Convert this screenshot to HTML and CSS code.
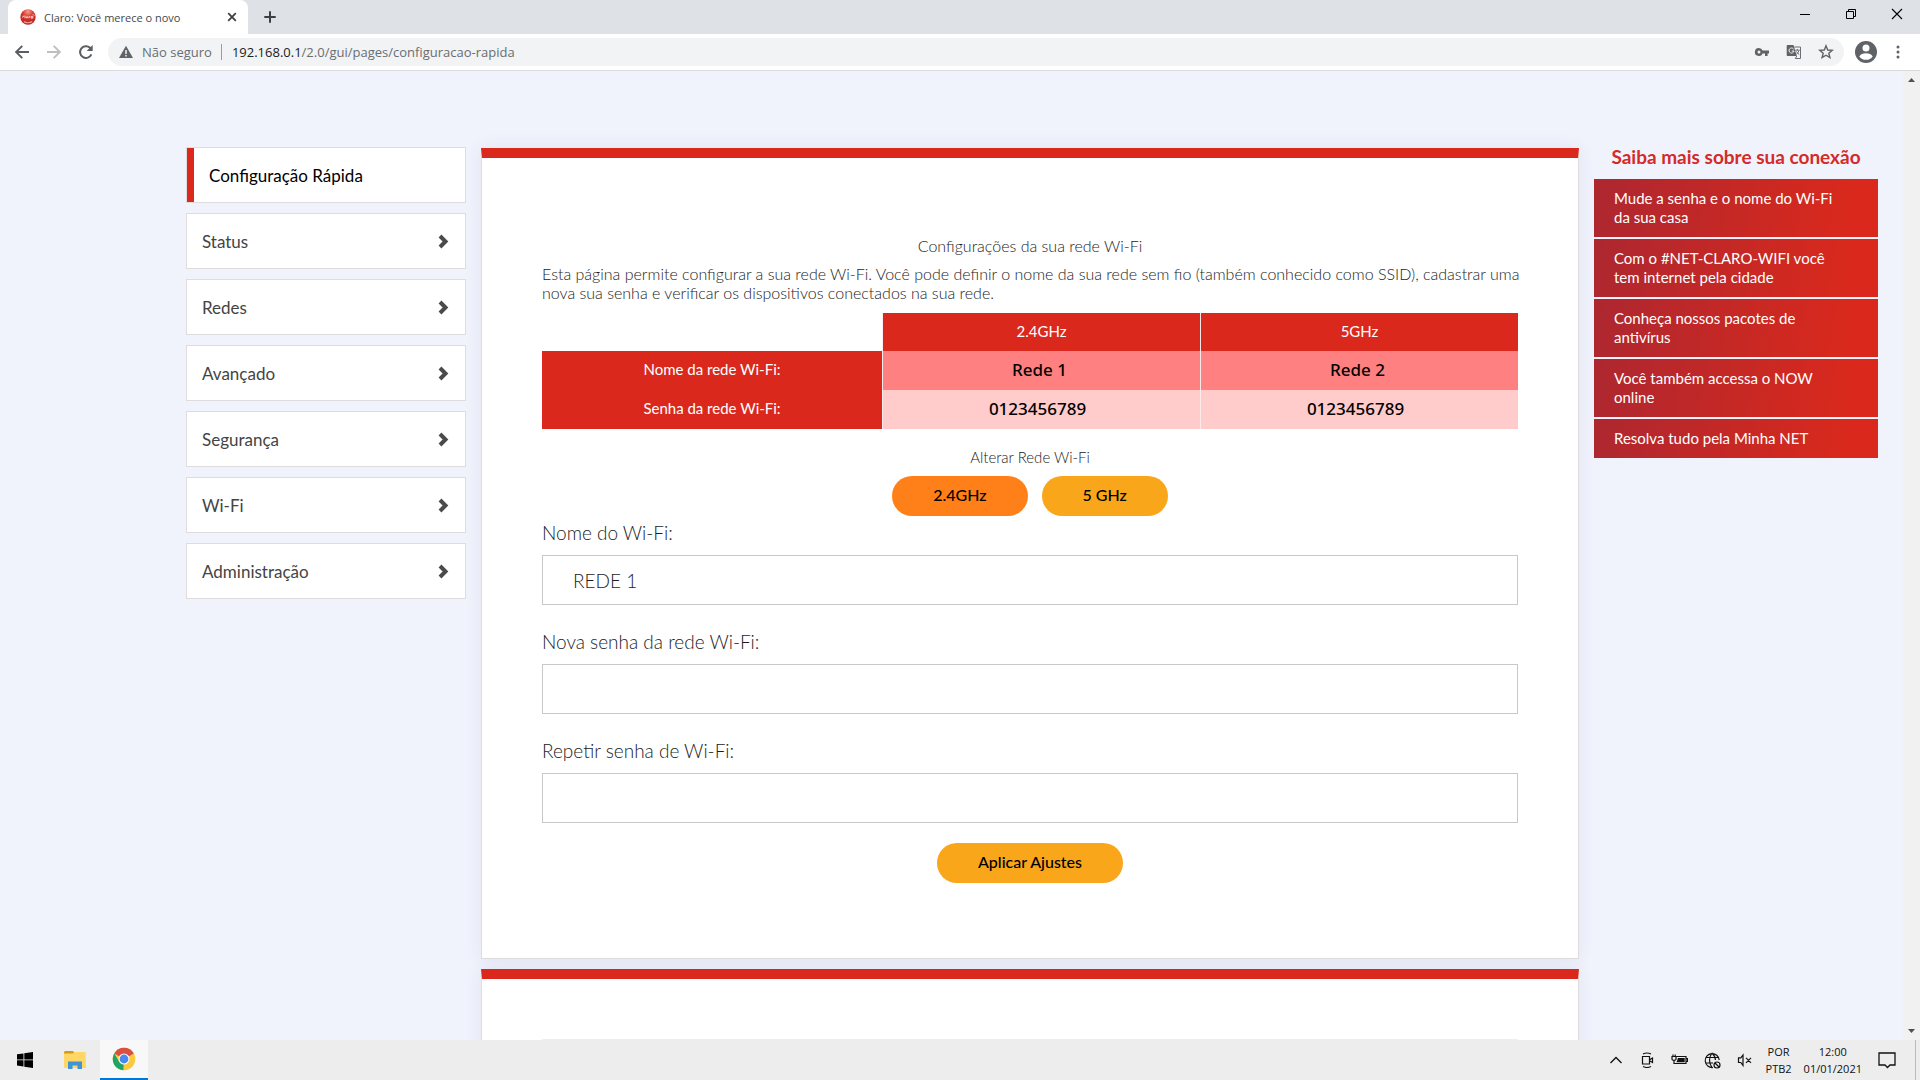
FILE: index.html
```html
<!DOCTYPE html>
<html lang="pt-BR">
<head>
<meta charset="utf-8">
<title>Claro: Você merece o novo</title>
<link rel="stylesheet" href="styles.css">
</head>
<body>
<header class="tabstrip">
  <div class="tab">
    <svg class="favicon" width="16" height="16" viewBox="0 0 16 16"><defs><radialGradient id="ball" cx="50%" cy="15%" r="85%"><stop offset="0" stop-color="#f2a08c"/><stop offset=".4" stop-color="#da3a30"/><stop offset="1" stop-color="#b91c22"/></radialGradient></defs><circle cx="8" cy="8" r="7.7" fill="url(#ball)"/><path d="M2.5 8.6q0-1.7 1.8-1.5M5 6.6v2.6M6.4 9.2V7.8h1.3v1.4M9 9.2V7.6h1M11 7.6h1.8v1.5H11zM12.4 6.2l.8-.9M13.5 6.8l.9-.3" stroke="#fbe4e0" stroke-width=".9" fill="none"/><path d="M3.8 12.6q4.2 2.3 8.4 0" stroke="#e99a90" stroke-width="1.2" fill="none"/></svg>
    <span class="tab-title">Claro: Você merece o novo</span>
    <button class="icon-btn" aria-label="Fechar guia"><svg width="16" height="16" viewBox="0 0 16 16"><path d="M4.2 4.2l7.6 7.6M11.8 4.2l-7.6 7.6" stroke="#3c4043" stroke-width="1.8"/></svg></button>
  </div>
  <button class="icon-btn new-tab" aria-label="Nova guia"><svg width="16" height="16" viewBox="0 0 16 16"><path d="M8 2.3v11.4M2.3 8h11.4" stroke="#3c4043" stroke-width="2"/></svg></button>
  <div class="window-controls">
    <button class="icon-btn" aria-label="Minimizar"><svg width="46" height="28" viewBox="0 0 46 28"><path d="M18 14.5h10" stroke="#000"/></svg></button>
    <button class="icon-btn" aria-label="Restaurar"><svg width="46" height="28" viewBox="0 0 46 28"><path d="M18.500 11.500h7v7h-7zM20.500 11.500v-2h7v7h-2" fill="none" stroke="#000"/></svg></button>
    <button class="icon-btn" aria-label="Fechar"><svg width="46" height="28" viewBox="0 0 46 28"><path d="M18 9l10 10M28 9l-10 10" stroke="#000" stroke-width="1.100"/></svg></button>
  </div>
</header>
<div class="toolbar">
  <button class="icon-btn" aria-label="Voltar"><svg width="16" height="16" viewBox="0 0 16 16"><path d="M15 8H2.500M8.300 1.800L2.100 8l6.200 6.200" fill="none" stroke="#5a5e62" stroke-width="1.900"/></svg></button>
  <button class="icon-btn" aria-label="Avançar"><svg width="16" height="16" viewBox="0 0 16 16"><path d="M1 8h12.500M7.700 1.800L13.900 8l-6.200 6.200" fill="none" stroke="#bdbfc1" stroke-width="1.900"/></svg></button>
  <button class="icon-btn" aria-label="Recarregar"><svg width="16" height="16" viewBox="0 0 16 16"><path d="M13.400 10.400A5.900 5.900 0 1 1 12 3.700L13.500 5.200" fill="none" stroke="#5a5e62" stroke-width="2"/><path d="M14.700 1v6H8.700z" fill="#5a5e62"/></svg></button>
  <div class="address">
    <svg width="14" height="14" viewBox="0 0 14 14"><path d="M7 .8L14 13H0z" fill="#5f6368"/><path d="M7 5v4M7 10v1.600" stroke="#f1f3f4" stroke-width="1.500"/></svg>
    <span class="insecure">Não seguro</span>
    <span class="url"><b>192.168.0.1</b>/2.0/gui/pages/configuracao-rapida</span>
    <div class="address-actions">
      <button class="icon-btn" aria-label="Senhas"><svg width="16" height="16" viewBox="0 0 16 16"><path fill-rule="evenodd" d="M5 4a4 4 0 1 0 3.600 5.400H11V12h2.600V9.400H15V6.500H8.600A4 4 0 0 0 5 4zm0 2.500a1.500 1.500 0 1 1 0 3 1.500 1.500 0 0 1 0-3z" fill="#5f6368"/></svg></button>
      <button class="icon-btn" aria-label="Traduzir"><svg width="16" height="16" viewBox="0 0 16 16"><path d="M1.500 1h6l3.300 11h-9.300a.8.800 0 0 1-.8-.8V1.800A.8.800 0 0 1 1.500 1z" fill="#5f6368"/><path d="M7.600 5.100A2.500 2.500 0 1 0 8 7H5.800" fill="none" stroke="#f1f3f4"/><path d="M8.300 3h6.200v11.500H9.300l1.500-2.500M9.200 6.200h4.500M11.400 5v1.200M13 6.500q-.8 2.500-2.800 4M10.500 7.500q1 2 2.800 3" fill="none" stroke="#6c7074"/></svg></button>
      <button class="icon-btn" aria-label="Favoritos"><svg width="16" height="16" viewBox="0 0 16 16"><path d="M8 1.800l1.700 4.200 4.500.3-3.400 2.900 1.100 4.400L8 11.200l-3.900 2.400 1.100-4.400L1.800 6.300l4.500-.3z" fill="none" stroke="#5f6368" stroke-width="1.400"/></svg></button>
    </div>
  </div>
  <button class="icon-btn profile" aria-label="Perfil"><svg width="22" height="22" viewBox="0 0 22 22"><circle cx="11" cy="11" r="11" fill="#5f6368"/><circle cx="11" cy="7" r="3.500" fill="#fff"/><path d="M4.300 15.400Q6.200 12.300 11 12.300t6.700 3.100Q15.300 18.800 11 18.800T4.300 15.400z" fill="#fff"/></svg></button>
  <button class="icon-btn" aria-label="Menu"><svg width="16" height="16" viewBox="0 0 16 16"><g fill="#5f6368"><circle cx="8" cy="3" r="1.500"/><circle cx="8" cy="8" r="1.500"/><circle cx="8" cy="13" r="1.500"/></g></svg></button>
</div>

<div class="viewport">
  <div class="page">
    <nav class="side-menu">
      <a class="menu-item active" href="#">Configuração Rápida</a>
      <a class="menu-item" href="#">Status<svg class="chevron" viewBox="0 0 11 14"><path d="M2 2L7.500 7.500 2 13" /></svg></a>
      <a class="menu-item" href="#">Redes<svg class="chevron" viewBox="0 0 11 14"><path d="M2 2L7.500 7.500 2 13" /></svg></a>
      <a class="menu-item" href="#">Avançado<svg class="chevron" viewBox="0 0 11 14"><path d="M2 2L7.500 7.500 2 13" /></svg></a>
      <a class="menu-item" href="#">Segurança<svg class="chevron" viewBox="0 0 11 14"><path d="M2 2L7.500 7.500 2 13" /></svg></a>
      <a class="menu-item" href="#">Wi-Fi<svg class="chevron" viewBox="0 0 11 14"><path d="M2 2L7.500 7.500 2 13" /></svg></a>
      <a class="menu-item" href="#">Administração<svg class="chevron" viewBox="0 0 11 14"><path d="M2 2L7.500 7.500 2 13" /></svg></a>
    </nav>
    <main class="content">
      <section class="panel">
        <h1 class="caption">Configurações da sua rede Wi-Fi</h1>
        <p class="intro">Esta página permite configurar a sua rede Wi-Fi. Você pode definir o nome da sua rede sem fio (também conhecido como SSID), cadastrar uma<br>nova sua senha e verificar os dispositivos conectados na sua rede.</p>
        <table class="networks">
          <colgroup><col class="col-label"><col><col></colgroup>
          <thead><tr><td></td><th scope="col">2.4GHz</th><th scope="col">5GHz</th></tr></thead>
          <tbody>
            <tr class="names"><th scope="row">Nome da rede Wi-Fi:</th><td>Rede 1</td><td>Rede 2</td></tr>
            <tr class="keys"><th scope="row">Senha da rede Wi-Fi:</th><td>0123456789</td><td>0123456789</td></tr>
          </tbody>
        </table>
        <h2 class="caption">Alterar Rede Wi-Fi</h2>
        <div class="bands">
          <button class="pill selected">2.4GHz</button>
          <button class="pill">5 GHz</button>
        </div>
        <form class="form">
          <div class="field"><label for="ssid">Nome do Wi-Fi:</label><input id="ssid" type="text" value="REDE 1"></div>
          <div class="field"><label for="pass">Nova senha da rede Wi-Fi:</label><input id="pass" type="password"></div>
          <div class="field"><label for="pass2">Repetir senha de Wi-Fi:</label><input id="pass2" type="password"></div>
          <button class="pill" type="button">Aplicar Ajustes</button>
        </form>
      </section>
      <section class="panel"><div class="devices"></div></section>
    </main>
    <aside class="learn-more">
      <h2>Saiba mais sobre sua conexão</h2>
      <a href="#">Mude a senha e o nome do Wi-Fi da sua casa</a>
      <a href="#">Com o #NET-CLARO-WIFI você tem internet pela cidade</a>
      <a href="#">Conheça nossos pacotes de antivírus</a>
      <a href="#">Você também accessa o NOW online</a>
      <a href="#">Resolva tudo pela Minha NET</a>
    </aside>
  </div>
  <div class="scrollbar">
    <svg width="17" height="17" viewBox="0 0 17 17"><path d="M5 11l3.500-4 3.500 4z" fill="#505050"/></svg>
    <svg width="17" height="17" viewBox="0 0 17 17"><path d="M5 6l3.500 4L12 6z" fill="#505050"/></svg>
  </div>
</div>

<footer class="taskbar">
  <button class="task" aria-label="Iniciar"><svg width="16" height="16" viewBox="0 0 16 16"><path d="M0 2.300L6.500 1.400V7.500H0zM7.300 1.300L16 0v7.500H7.300zM0 8.300h6.500v6.200L0 13.600zM7.300 8.300H16V16l-8.700-1.300z"/></svg></button>
  <button class="task" aria-label="Explorador de Arquivos"><svg width="22" height="18" viewBox="0 0 22 18"><path d="M1 0h8l1 1.500V3H0V1z" fill="#d99a12"/><path d="M0 2.500h9L10.500 1H21l.8 1v15H0z" fill="#ffd767"/><path d="M4 10.500h14V18h-4.500v-3.500h-5V18H4z" fill="#3f94d4"/></svg></button>
  <button class="task current" aria-label="Google Chrome"><svg width="24" height="24" viewBox="0 0 24 24"><circle cx="12" cy="12" r="11.300" fill="#fbc93c"/><path d="M12 12L2.200 6.400A11.300 11.300 0 0 1 21.800 6.400z" fill="#d94f43"/><path d="M2.200 6.400L7.400 15 12 17.200 11.500 23.300A11.300 11.300 0 0 1 2.200 6.400z" fill="#1fa463"/><path d="M16.500 14.500L11.500 23.300 12 12z" fill="#fbc93c"/><path d="M12 6.400h9.800L12 8z" fill="#d94f43"/><circle cx="12" cy="12" r="5.500" fill="#f7f8fa"/><circle cx="12" cy="12" r="4.400" fill="#4a87ee"/></svg></button>
  <div class="tray">
    <svg width="14" height="16" viewBox="0 0 14 16"><path d="M1.500 11L7 5.500l5.500 5.500" fill="none" stroke="#111" stroke-width="1.300"/></svg>
    <svg width="16" height="16" viewBox="0 0 16 16"><path d="M3.500 4.500h7v7.500h-7zM11 7.500l2.500-1.500v4.500L11 9M4 2Q8 0 12 2M4 14.500q4 2 8 0" fill="none" stroke="#111" stroke-width="1.200"/></svg>
    <svg width="17" height="16" viewBox="0 0 17 16"><path d="M5.500 4.500h9.500v7H4.500M15 6.500h1.500v3H15M1 4.500h4v2.800Q3 9.500 1 7.300zM2 2.500v2M4.200 2.500v2M3 8.500v3h2" fill="none" stroke="#111" stroke-width="1.200"/><path d="M7 6h6.700v4.200H5.500z" fill="#111"/></svg>
    <svg width="17" height="17" viewBox="0 0 17 17"><path d="M9 15.500A7 7 0 1 1 15.200 8M8 1q-5 7 0 14.500M8 1q3.500 3.500 3.400 7M1.500 5.500h13M1.500 11H9" fill="none" stroke="#111" stroke-width="1.200"/><circle cx="13" cy="13" r="3" fill="#ededed" stroke="#111" stroke-width="1.200"/><path d="M11 11l4 4" stroke="#111" stroke-width="1.200"/></svg>
    <svg width="16" height="16" viewBox="0 0 16 16"><path d="M1.500 5.800h2.300L6 3v10.500l-2.200-3H1.500zM9 5.800l5 5M14 5.800l-5 5" fill="none" stroke="#111" stroke-width="1.200"/></svg>
    <div class="tray-text">POR<br>PTB2</div>
    <div class="tray-text clock">12:00<br>01/01/2021</div>
    <svg width="18" height="18" viewBox="0 0 18 18"><path d="M1 2h16v12h-5l-2.500 2.500L7 14H1z" fill="none" stroke="#111" stroke-width="1.300"/></svg>
  </div>
</footer>
</body>
</html>
```
FILE: styles.css
```css
* { box-sizing: border-box; }
body {
  margin: 0;
  height: 100vh;
  display: flex;
  flex-direction: column;
  overflow: hidden;
  font-family: Lato, "Liberation Sans", sans-serif;
  font-size: 16px;
  line-height: 19px;
  color: #1c1c1c;
}
svg { display: block; flex: none; }
h1, h2, p { margin: 0; }
a { color: inherit; text-decoration: none; }
button { font-family: inherit; border: 0; cursor: pointer; }
.icon-btn { padding: 0; background: none; }

/* Browser frame */
.tabstrip, .toolbar, .taskbar { font-family: "Open Sans", "Noto Sans", sans-serif; }
.tabstrip {
  display: flex;
  height: 34px;
  padding-left: 8px;
  background: #dee1e6;
}
.tab {
  display: flex;
  align-items: center;
  width: 240px;
  padding: 0 8px 0 12px;
  background: #fff;
  border-radius: 8px 8px 0 0;
}
.tab-title {
  flex: 1;
  padding-left: 8px;
  font-size: 11px;
  white-space: nowrap;
  color: #45484c;
}
.new-tab { padding: 0 12px 0 14px; }
.window-controls { display: flex; align-items: flex-start; margin-left: auto; }
.toolbar {
  display: flex;
  align-items: center;
  gap: 16px;
  height: 37px;
  padding: 0 14px;
  background: #fff;
  border-bottom: 1px solid #d9dadd;
}
.address {
  flex: 1;
  display: flex;
  align-items: center;
  height: 28px;
  margin: 0 -5px 0 -2px;
  padding: 0 10px 0 11px;
  border-radius: 14px;
  background: #f1f3f4;
  font-size: 13px;
  color: #6a6e72;
}
.insecure {
  padding: 0 9px;
  border-right: 1px solid #9a9da0;
  line-height: 16px;
}
.url { padding-left: 10px; }
.url b { font-weight: 400; color: #202124; }
.address-actions { display: flex; gap: 16px; margin-left: auto; }
.profile { margin-right: -3px; }

/* Page area */
.viewport {
  flex: 1;
  min-height: 0;
  display: flex;
  background: #f0f3fc;
}
.page {
  flex: 1;
  display: grid;
  grid-template-columns: 280px minmax(0, 1fr) 284px;
  align-items: start;
  gap: 15px;
  padding: 76px 25px 0 186px;
  overflow: hidden;
}
.scrollbar {
  display: flex;
  flex-direction: column;
  justify-content: space-between;
  width: 17px;
  background: #f1f1f1;
}
.side-menu { display: flex; flex-direction: column; gap: 10px; }
.menu-item {
  display: flex;
  align-items: center;
  justify-content: space-between;
  height: 56px;
  padding: 0 16px 0 15px;
  border: 1px solid #e0dcdc;
  background: #fff;
  font-size: 17px;
  color: #444;
}
.menu-item.active {
  padding-left: 22px;
  box-shadow: inset 7px 0 #da291c;
  color: #000;
}
.chevron { width: 11px; height: 14px; overflow: visible; fill: none; stroke: #4a4a4a; stroke-width: 4; }

.content { display: flex; flex-direction: column; gap: 10px; padding-top: 1px; }
.panel {
  padding: 60px;
  border: 1px solid #e0dcdc;
  border-top: 10px solid #da291c;
  background: #fff;
  box-shadow: 0 0 16px rgba(60, 50, 100, .08);
}
.panel:first-child { padding: 78px 60px 75px; }
.caption {
  text-align: center;
  font-size: 15px;
  font-weight: 300;
  line-height: 20px;
}
h1.caption { font-size: 16px; }
.intro { margin: 8px -20px 11px 0; font-size: 16px; font-weight: 300; }
.networks {
  width: 100%;
  table-layout: fixed;
  border-collapse: separate;
  border-spacing: 0;
  text-align: center;
}
.col-label { width: 340px; }
.networks th, .networks td { height: 39px; padding: 0 0 2px; }
.networks thead th, .networks thead td { height: 38px; }
.networks th { background: #da291c; color: #fff; font-weight: 400; font-size: 15px; }
.networks th + td, .networks td + td, .networks td + th, .networks th + th { border-left: 1px solid #fdeaea; }
.networks tbody td {
  padding-right: 4px;
  font-family: "Noto Sans", sans-serif;
  font-size: 17px;
  font-weight: 500;
  color: #000;
}
.names td { background: #ff8080; }
.networks .keys td { padding-right: 8px; background: #ffcbcb; }
.networks + .caption { margin-top: 18px; }
.bands { display: flex; justify-content: center; gap: 14px; margin-top: 9px; }
.pill {
  height: 40px;
  padding: 0 41px 4px;
  border-radius: 20px;
  background: #faa61a;
  font-size: 16px;
  font-weight: 500;
  color: #000;
}
.pill.selected { background: #ff7f19; }
.form { display: flex; flex-direction: column; align-items: center; gap: 20px; }
.field {
  display: flex;
  flex-direction: column;
  gap: 5px;
  width: 100%;
  font-size: 19px;
  font-weight: 300;
  line-height: 34px;
}
.field input {
  width: 100%;
  height: 50px;
  padding: 0 30px;
  border: 1px solid #c8c8c8;
  background: #fff;
  font: inherit;
  color: inherit;
}
.devices { height: 200px; border-top: 1px solid #eee; }

.learn-more { display: flex; flex-direction: column; gap: 2px; padding-top: 1px; }
.learn-more h2 {
  padding-bottom: 11px;
  font-size: 19px;
  line-height: 18px;
  text-align: center;
  color: #d42a28;
}
.learn-more a {
  padding: 10px 40px 10px 20px;
  background: linear-gradient(100deg, #ad2730, #da291c 90%);
  font-size: 15px;
  color: #fff;
}

/* Desktop taskbar */
.taskbar { display: flex; height: 40px; background: #ededed; }
.task {
  display: flex;
  align-items: center;
  justify-content: center;
  width: 50px;
  padding: 0;
  background: none;
}
.task.current { width: 48px; background: #f8f8f8; border-bottom: 2px solid #0078d7; }
.tray {
  display: flex;
  align-items: center;
  gap: 16px;
  margin: 0 4px 0 auto;
  padding-right: 19px;
  border-right: 1px solid #bbb;
}
.tray-text {
  font-size: 11px;
  line-height: 17px;
  text-align: center;
  color: #111;
}
.tray-text:first-of-type { margin: 0 -4px 0 -3px; }
```
